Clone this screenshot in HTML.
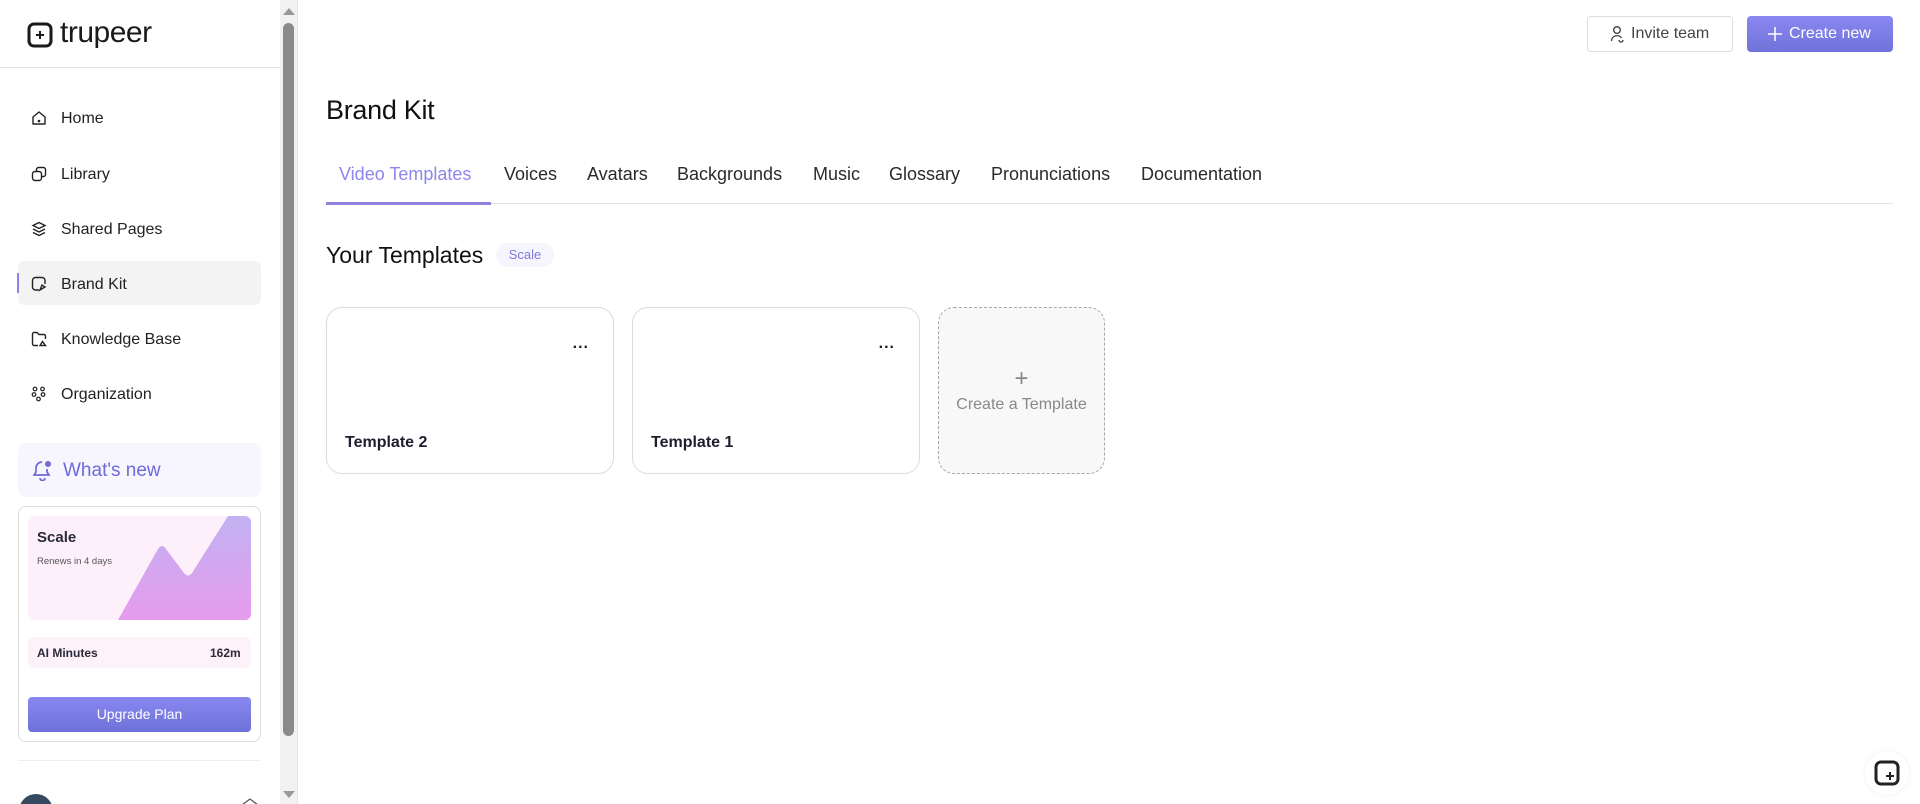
<!DOCTYPE html>
<html><head><meta charset="utf-8"><style>
*{box-sizing:border-box;margin:0;padding:0}
html,body{width:1920px;height:804px;overflow:hidden}
body{background:#fff;font-family:"Liberation Sans",sans-serif;color:#1a1a1a;position:relative}
.abs{position:absolute}
.side{left:0;top:0;width:298px;height:804px;border-right:1px solid #e6e6e6;overflow:hidden}
.nav{position:absolute;left:18px;width:243px;height:44px;display:flex;align-items:center;font-size:16px;color:#222}
.nav svg{position:absolute;left:13px;top:15px}
.nav span{position:absolute;left:43px;top:15px}
.tab{position:absolute;top:164px;font-size:18px;color:#2a2a2a}
.card{position:absolute;top:307px;height:167px;border:1px solid #dcdcdc;border-radius:16px;background:#fff}
.card .t{position:absolute;left:18px;top:126px;font-weight:bold;font-size:16px;color:#1e1e2e}
.card .d{position:absolute;right:24px;top:32px;font-weight:bold;font-size:16px;letter-spacing:1px;line-height:8px}
</style></head><body>
<div class="abs side">
  <svg class="abs" style="left:27px;top:22px" width="26" height="26" viewBox="0 0 26 26"><rect x="2" y="2" width="22" height="22" rx="5" fill="none" stroke="#1a1a1a" stroke-width="3"/><path d="M13 9v8M9 13h8" stroke="#1a1a1a" stroke-width="2"/></svg>
  <div class="abs" style="left:60px;top:16px;font-size:30px;letter-spacing:-0.5px;color:#1a1a1a">trupeer</div>
  <div class="abs" style="left:0;top:67px;width:280px;height:1px;background:#e2e2e2"></div>
  <div class="nav" style="top:95px"><svg width="16" height="16" viewBox="0 0 16 16" fill="none" stroke="#222" stroke-width="1.4"><path d="M2 7l6-5 6 5v7H2z" stroke-linejoin="round"/><circle cx="8" cy="11" r=".6" fill="#222"/></svg><span>Home</span></div>
  <div class="nav" style="top:151px"><svg width="16" height="16" viewBox="0 0 16 16" fill="none" stroke="#222" stroke-width="1.4"><rect x="1.5" y="5.5" width="9" height="9" rx="2.5"/><path d="M5.5 5.5V3.5a2 2 0 012-2h5a2 2 0 012 2v5a2 2 0 01-2 2h-2"/></svg><span>Library</span></div>
  <div class="nav" style="top:206px"><svg width="16" height="16" viewBox="0 0 16 16" fill="none" stroke="#222" stroke-width="1.4"><path d="M8 1.5l6 3-6 3-6-3z M2 8l6 3 6-3 M2 11.5l6 3 6-3"/></svg><span>Shared Pages</span></div>
  <div class="nav" style="top:261px;background:#f3f3f3;border-radius:6px"><div class="abs" style="left:-1px;top:12px;width:2px;height:20px;background:#8b82ec"></div><svg width="16" height="16" viewBox="0 0 16 16" fill="none" stroke="#222" stroke-width="1.4"><path d="M14 8V4.5a3 3 0 00-3-3H4.5a3 3 0 00-3 3V11a3 3 0 003 3H8"/><path d="M9 14l2-5 3 2z"/></svg><span>Brand Kit</span></div>
  <div class="nav" style="top:316px"><svg width="16" height="16" viewBox="0 0 16 16" fill="none" stroke="#222" stroke-width="1.4"><path d="M7 14.5H3a1.5 1.5 0 01-1.5-1.5V3A1.5 1.5 0 013 1.5h3l2 2h5a1.5 1.5 0 011.5 1.5v3"/><path d="M9 14.5l2.5-4 3 4z"/></svg><span>Knowledge Base</span></div>
  <div class="nav" style="top:371px"><svg width="16" height="16" viewBox="0 0 16 16" fill="none" stroke="#222" stroke-width="1.2"><circle cx="4" cy="3" r="1.8"/><circle cx="11.5" cy="3" r="1.8"/><circle cx="3" cy="8.5" r="1.8"/><circle cx="12" cy="8.5" r="1.8"/><circle cx="7.5" cy="13" r="1.8"/></svg><span>Organization</span></div>
  <div class="abs" style="left:18px;top:443px;width:243px;height:54px;background:#f7f6fe;border-radius:8px"></div>
  <svg class="abs" style="left:33px;top:459px" width="20" height="22" viewBox="0 0 20 22" fill="none" stroke="#6e6ad8" stroke-width="1.7"><path d="M9 3a6 6 0 00-6 6v4l-2 3h15l-2-3V10"/><path d="M7 19a2.5 2.5 0 005 0"/><circle cx="15" cy="5" r="3" fill="#6e6ad8" stroke="none"/></svg>
  <div class="abs" style="left:63px;top:460px;font-size:19px;color:#6e6ad8">What's new</div>
  <div class="abs" style="left:18px;top:506px;width:243px;height:236px;border:1px solid #ddd;border-radius:8px"></div>
  <div class="abs" style="left:28px;top:516px;width:223px;height:104px;border-radius:6px;background:#fdf0fb;overflow:hidden">
    <svg class="abs" style="left:0;top:0" width="223" height="104" viewBox="0 0 223 104"><defs><linearGradient id="g" x1="0" y1="0" x2="0" y2="1"><stop offset="0" stop-color="#c2b2f3"/><stop offset="1" stop-color="#e69bec"/></linearGradient></defs><path d="M90 104L130 33q4-6 8 0l18 24q4 5 8 0L200 0H223V104z" fill="url(#g)"/></svg>
    <div class="abs" style="left:9px;top:13px;font-size:15px;font-weight:bold;color:#2a2a3a">Scale</div>
    <div class="abs" style="left:9px;top:40px;font-size:9.5px;color:#555">Renews in 4 days</div>
  </div>
  <div class="abs" style="left:28px;top:637px;width:223px;height:31px;border-radius:6px;background:#fdf1fa"></div>
  <div class="abs" style="left:37px;top:646px;font-size:12px;font-weight:bold;color:#2a2a3a">AI Minutes</div>
  <div class="abs" style="left:210px;top:646px;font-size:12px;font-weight:bold;color:#2a2a3a">162m</div>
  <div class="abs" style="left:28px;top:697px;width:223px;height:35px;border-radius:4px;background:linear-gradient(#8a87f1,#6d72d8);color:#fff;font-size:14px;text-align:center;line-height:35px">Upgrade Plan</div>
  <div class="abs" style="left:18px;top:760px;width:243px;height:1px;background:#eee"></div>
  <div class="abs" style="left:19px;top:794px;width:34px;height:34px;border-radius:50%;background:#34495e"></div>
  <svg class="abs" style="left:240px;top:797px" width="20" height="8" viewBox="0 0 20 8"><path d="M2 8l8-6 8 6" fill="none" stroke="#555" stroke-width="1.3"/></svg>
  <div class="abs" style="left:280px;top:0;width:17px;height:804px;background:#f1f1f1"></div>
  <div class="abs" style="left:283px;top:23px;width:11px;height:713px;background:#8a8a8a;border-radius:6px"></div>
  <svg class="abs" style="left:282px;top:6px" width="14" height="10"><path d="M1 9L7 2l6 7z" fill="#999"/></svg>
  <svg class="abs" style="left:282px;top:790px" width="14" height="10"><path d="M1 1l6 7 6-7z" fill="#999"/></svg>
</div>

<div class="abs" style="left:1587px;top:16px;width:146px;height:36px;border:1px solid #ddd;border-radius:4px;font-size:16px;color:#444;line-height:34px;padding-left:43px">Invite team</div>
<svg class="abs" style="left:1610px;top:25px" width="14" height="18" viewBox="0 0 14 18" fill="none" stroke="#444" stroke-width="1.4"><circle cx="7" cy="5" r="3.3"/><path d="M1.5 16a5.5 5.5 0 0110-3"/><path d="M9 15a2 2 0 104 0" /></svg>
<div class="abs" style="left:1747px;top:16px;width:146px;height:36px;border-radius:4px;background:linear-gradient(#8a87f1,#6f73d9);color:#fff;font-size:16px;line-height:36px;padding-left:42px">Create new</div>
<svg class="abs" style="left:1768px;top:27px" width="14" height="14"><path d="M7 0v14M0 7h14" stroke="#fff" stroke-width="1.5"/></svg>

<div class="abs" style="left:326px;top:95px;font-size:27px;color:#111;letter-spacing:-0.3px">Brand Kit</div>
<div class="tab" style="left:339px;color:#8f85ee">Video Templates</div>
<div class="tab" style="left:504px">Voices</div>
<div class="tab" style="left:587px">Avatars</div>
<div class="tab" style="left:677px">Backgrounds</div>
<div class="tab" style="left:813px">Music</div>
<div class="tab" style="left:889px">Glossary</div>
<div class="tab" style="left:991px">Pronunciations</div>
<div class="tab" style="left:1141px">Documentation</div>
<div class="abs" style="left:326px;top:203px;width:1567px;height:1px;background:#e4e4e4"></div>
<div class="abs" style="left:326px;top:202px;width:165px;height:3px;background:#8f85e0"></div>

<div class="abs" style="left:326px;top:242px;font-size:23px;color:#111">Your Templates</div>
<div class="abs" style="left:496px;top:243px;width:58px;height:24px;border-radius:12px;background:#f6f5fd;color:#7d79d6;font-size:13px;text-align:center;line-height:24px">Scale</div>

<div class="card" style="left:326px;width:288px"><div class="d">...</div><div class="t">Template 2</div></div>
<div class="card" style="left:632px;width:288px"><div class="d">...</div><div class="t">Template 1</div></div>
<div class="abs" style="left:938px;top:307px;width:167px;height:167px;border:1.5px dashed #a8a8a8;border-radius:16px;background:#f8f8f8;text-align:center;color:#888">
  <div style="margin-top:61px;font-size:24px;font-weight:300;line-height:20px">+</div>
  <div style="font-size:16px;margin-top:7px">Create a Template</div>
</div>

<div class="abs" style="left:1865px;top:751px;width:44px;height:44px;border-radius:50%;background:#fff;box-shadow:0 0 4px rgba(0,0,0,.08)"></div>
<svg class="abs" style="left:1873px;top:759px" width="28" height="28" viewBox="0 0 28 28"><rect x="3" y="3" width="22" height="22" rx="5" fill="none" stroke="#222" stroke-width="3"/><path d="M17 13v8M13 17h8" stroke="#222" stroke-width="2"/></svg>
</body></html>
